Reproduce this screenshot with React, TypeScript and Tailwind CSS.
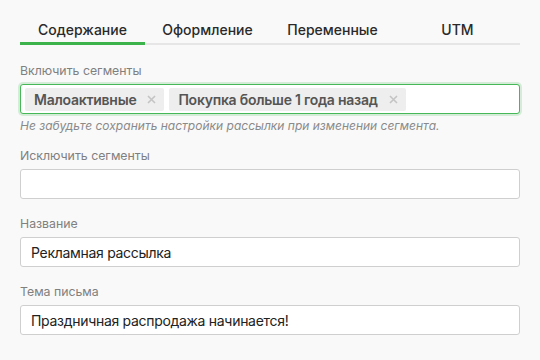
const tabs = ["Содержание", "Оформление", "Переменные", "UTM"];

const segments = ["Малоактивные", "Покупка больше 1 года назад"];

function Chip({ label }: { label: string }) {
  return (
    <span className="flex h-[23px] items-center gap-[11px] rounded-[2px] bg-[#eeeeee] pl-[9px] pr-[8px] text-[14px] font-semibold tracking-[-0.25px] text-[#555]">
      {label}
      <svg width="9" height="9" viewBox="0 0 9 9" className="text-[#c4c4c4]">
        <path d="M1 1L8 8M8 1L1 8" stroke="currentColor" strokeWidth="1.6" />
      </svg>
    </span>
  );
}

function Field({ label, value }: { label: string; value?: string }) {
  return (
    <div>
      <p className="mb-[5px] text-[12.3px] leading-4 text-[#808080]">{label}</p>
      <div className="flex h-[30px] items-center rounded-[3px] border border-[#cfcfcf] bg-white px-2.5 text-[14px] tracking-[-0.3px] text-[#222]">
        {value}
      </div>
    </div>
  );
}

export default function App() {
  return (
    <div
      className="h-[360px] w-[540px] bg-[#f9f9f9] px-5 pt-5"
      style={{ fontFamily: "Inter, 'Noto Sans', sans-serif" }}
    >
      <div className="grid grid-cols-4 border-b-2 border-[#e6e6e6]">
        {tabs.map((tab, i) => (
          <div
            key={tab}
            className={
              "-mb-[2px] border-b-[3px] pb-[2px] text-center text-[14px] font-medium leading-5 text-[#2a2a2a] " +
              (i === 0 ? "border-[#3cb44b]" : "border-transparent")
            }
          >
            {tab}
          </div>
        ))}
      </div>

      <div className="mt-[18px]">
        <p className="mb-[5px] text-[12.3px] leading-4 text-[#808080]">Включить сегменты</p>
        <div className="flex h-[30px] items-center gap-[5px] rounded-[3px] border border-[#46b857] bg-white px-[4px] shadow-[0_0_0_2px_rgba(70,184,87,0.2)]">
          {segments.map((s) => (
            <Chip key={s} label={s} />
          ))}
        </div>
        <p className="mt-1 text-[12px] italic leading-4 text-[#8a8a8a]">
          Не забудьте сохранить настройки рассылки при изменении сегмента.
        </p>
      </div>

      <div className="mt-[14px] flex flex-col gap-[17px]">
        <Field label="Исключить сегменты" />
        <Field label="Название" value="Рекламная рассылка" />
        <Field label="Тема письма" value="Праздничная распродажа начинается!" />
      </div>
    </div>
  );
}
